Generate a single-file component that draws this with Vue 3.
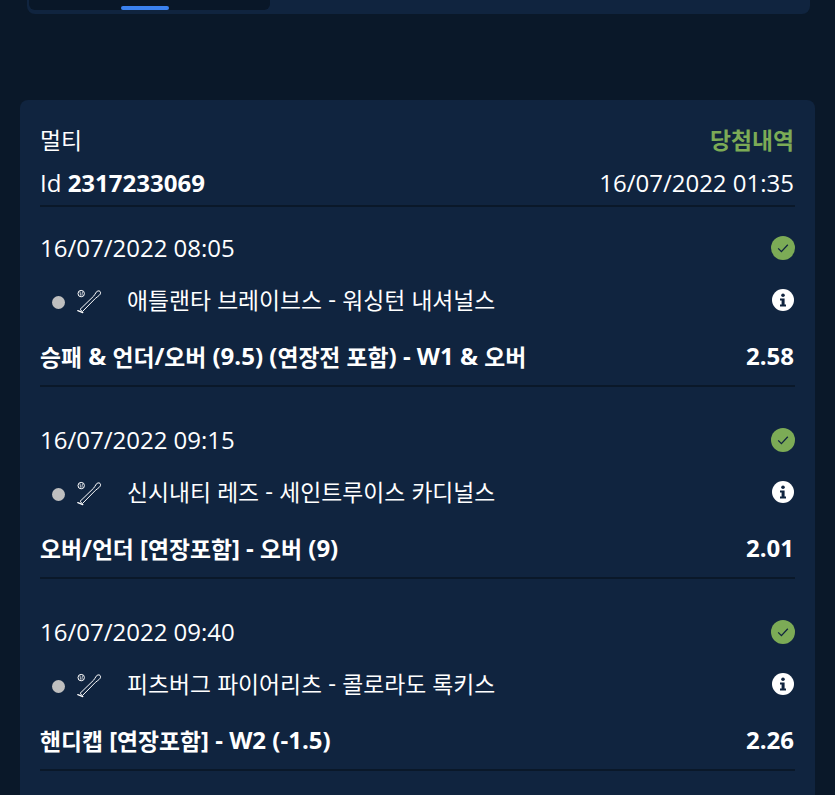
<script setup>
const bets = [
  { date: '16/07/2022 08:05', match: '애틀랜타 브레이브스 - 워싱턴 내셔널스', market: '승패 & 언더/오버 (9.5) (연장전 포함) - W1 & 오버', odds: '2.58' },
  { date: '16/07/2022 09:15', match: '신시내티 레즈 - 세인트루이스 카디널스', market: '오버/언더 [연장포함] - 오버 (9)', odds: '2.01' },
  { date: '16/07/2022 09:40', match: '피츠버그 파이어리츠 - 콜로라도 록키스', market: '핸디캡 [연장포함] - W2 (-1.5)', odds: '2.26' }
]

// hangul runs are set a bit smaller than the latin text around them
const runs = (text) => text.split(/([가-힣]+)/).filter(Boolean)
const isKo = (part) => /[가-힣]/.test(part)
</script>

<template>
  <div class="page">
    <div class="top-panel">
      <div class="tabs">
        <span class="tabs__active"></span>
      </div>
    </div>

    <section class="card">
      <header class="card__head">
        <div class="row row--title">
          <span class="ko">멀티</span>
          <span class="ko status">당첨내역</span>
        </div>
        <div class="row row--id">
          <span>Id <b>2317233069</b></span>
          <span class="end">16/07/2022 01:35</span>
        </div>
      </header>

      <div v-for="bet in bets" :key="bet.date" class="bet">
        <div class="row bet__date">
          <span>{{ bet.date }}</span>
          <svg class="check" viewBox="0 0 24 24" width="24" height="24">
            <circle cx="12" cy="12" r="12" fill="#7cab56" />
            <path d="M7.2 12.4l3.2 3.2 6.4-6.8" fill="none" stroke="#10243f" stroke-width="1.3" />
          </svg>
        </div>
        <div class="row bet__match">
          <div class="bet__teams">
            <span class="dot"></span>
            <svg class="sport" viewBox="0 0 26 26" width="26" height="26">
              <circle cx="5.2" cy="5.6" r="3.2" fill="none" stroke="#fff" stroke-width="1" />
              <path d="M4 3.6l.6 4M6.5 3.6l-.6 4" fill="none" stroke="#fff" stroke-width=".7" />
              <path d="M4 21.4L17.6 8.2c1-1 1.6-2.6 2.6-4 1-1.3 2.8-1.8 3.8-.8s.6 2.6-.6 3.8c-1.4 1.4-3 2.2-4 3.2L6.4 23.6z" fill="none" stroke="#fff" stroke-width="1" stroke-linejoin="round" />
              <path d="M1.8 22.6l5 2" fill="none" stroke="#fff" stroke-width="1.3" stroke-linecap="round" />
            </svg>
            <span class="bet__name">
              <span v-for="(part, i) in runs(bet.match)" :key="i" :class="{ ko: isKo(part) }">{{ part }}</span>
            </span>
          </div>
          <svg class="info" viewBox="0 0 22 22" width="22" height="22">
            <circle cx="11" cy="11" r="11" fill="#fff" />
            <circle cx="11" cy="6.2" r="1.8" fill="#10243f" />
            <path d="M8 9.4h4.6v6.2H14v2H8v-2h1.6v-4.2H8z" fill="#10243f" />
          </svg>
        </div>
        <div class="row bet__market">
          <span>
            <span v-for="(part, i) in runs(bet.market)" :key="i" :class="{ ko: isKo(part) }">{{ part }}</span>
          </span>
          <span class="end">{{ bet.odds }}</span>
        </div>
      </div>
    </section>
  </div>
</template>

<style>
html,
body {
  background: #0a1829;
}
</style>

<style scoped>
.page {
  height: 795px;
  overflow: hidden;
  background: #0a1829;
  font-family: "Open Sans", "Noto Sans CJK KR", sans-serif;
  color: #fff;
}

.top-panel {
  height: 14px;
  margin: 0 25px 86px 27px;
  background: #10243f;
  border-radius: 0 0 8px 8px;
}

.tabs {
  position: relative;
  width: 241px;
  height: 10px;
  margin-left: 2px;
  background: #091728;
  border-radius: 0 0 6px 6px;
}

.tabs__active {
  position: absolute;
  left: 92px;
  bottom: 0;
  width: 48px;
  height: 4px;
  background: #3b82f0;
  border-radius: 2px;
}

.card {
  margin: 0 20px;
  padding: 0 20px;
  height: 720px;
  background: #10243f;
  border-radius: 8px;
}

.row {
  display: flex;
  align-items: center;
  justify-content: space-between;
  line-height: 32px;
}

.end {
  margin-right: 1px;
}

.ko {
  font-size: 22.8px;
  font-family: "Noto Sans CJK KR", sans-serif;
  vertical-align: -1px;
}

.card__head {
  padding-top: 24px;
  height: 107px;
  box-sizing: border-box;
  border-bottom: 2px solid #0a1829;
  font-size: 24px;
}

.row--title {
  height: 32px;
  margin-bottom: 11px;
}

.row--id {
  height: 32px;
}

.row--id b {
  font-weight: 700;
}

.status {
  color: #7cab56;
  font-weight: 600;
  margin-right: 1px;
}

.bet {
  height: 180px;
  margin-bottom: 12px;
  box-sizing: border-box;
  border-bottom: 2px solid #0a1829;
  font-size: 24px;
}

.bet__date {
  height: 32px;
  padding-top: 25px;
}

.bet__match {
  height: 32px;
  margin-top: 19px;
}

.bet__teams {
  display: flex;
  align-items: center;
}

.dot {
  width: 13px;
  height: 13px;
  margin: 6px 0 0 12px;
  border-radius: 50%;
  background: #bfbfbf;
}

.sport {
  margin: 4px 0 0 11px;
}

.bet__name {
  margin-left: 25px;
}

.info {
  margin: 2px 1px 0 0;
}

.bet__market {
  height: 32px;
  margin-top: 25px;
  font-weight: 700;
}
</style>
